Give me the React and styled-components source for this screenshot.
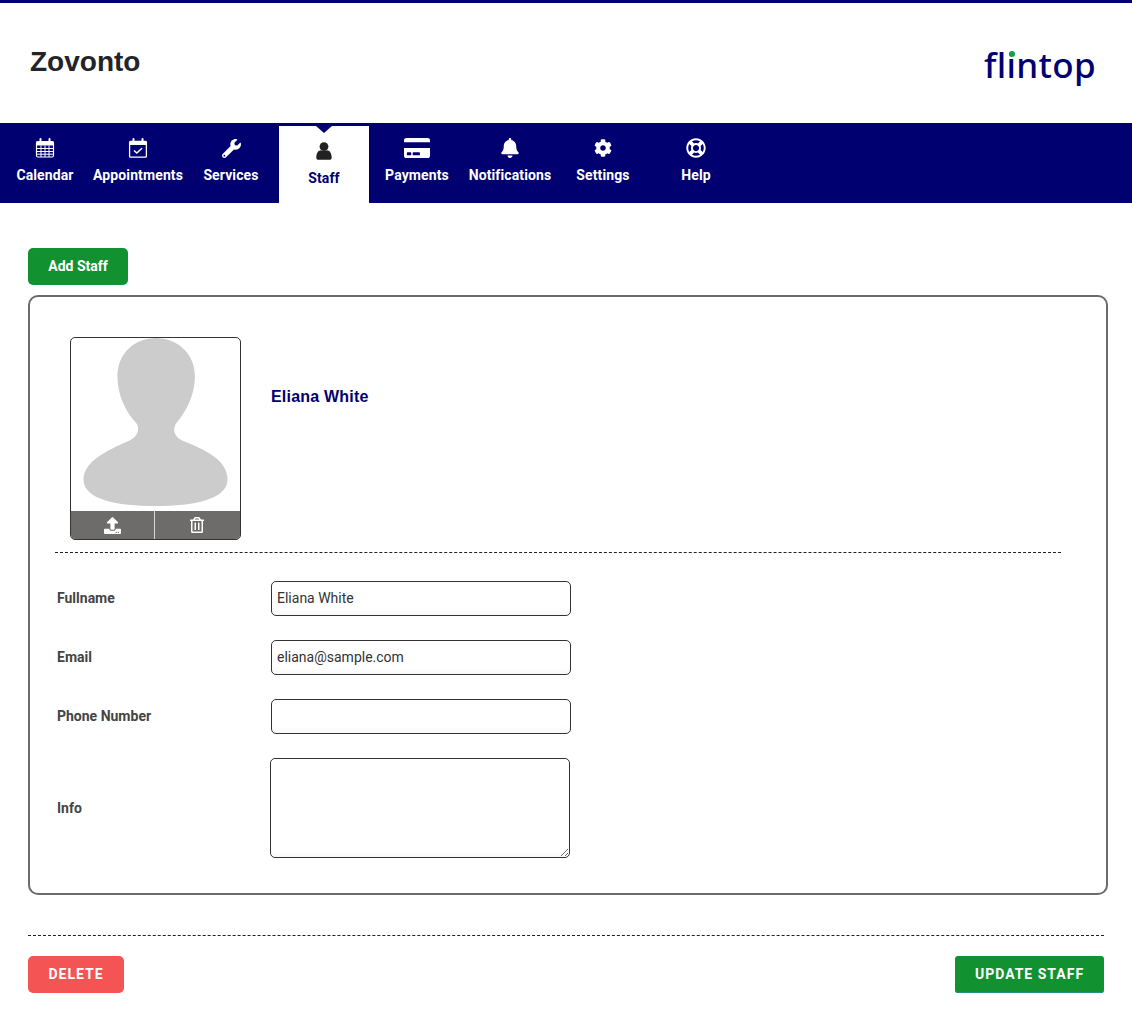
import React from 'react';
import styled, { createGlobalStyle } from 'styled-components';
import { FaWrench, FaCreditCard, FaBell, FaCog, FaRegLifeRing, FaUpload, FaRegTrashAlt } from 'react-icons/fa';

const NAVY = '#000070';

const GlobalStyle = createGlobalStyle`
  html, body { margin: 0; padding: 0; background: #fff; }
  body { font-family: Roboto, "Liberation Sans", sans-serif; color: #333; }
  * { box-sizing: border-box; }
`;

function CalendarIcon() {
  return (
    <svg width="20" height="20" viewBox="0 0 20 20" fill="none" stroke="currentColor">
      <rect x="1.5" y="3.5" width="17" height="15.5" rx="1.5" strokeWidth="1.2" />
      <path d="M1.5 3.5h17v4h-17z" fill="currentColor" stroke="none" />
      <path d="M5.5 1v4M14.5 1v4" strokeWidth="2" strokeLinecap="round" />
      <path d="M2 10.5h16M2 13.5h16M2 16.2h16M6 7.5V19M10 7.5V19M14 7.5V19" strokeWidth="1" />
    </svg>
  );
}

function AppointmentIcon() {
  return (
    <svg width="20" height="20" viewBox="0 0 20 20" fill="none" stroke="currentColor">
      <rect x="1.6" y="3.5" width="16.8" height="15.7" rx="1" strokeWidth="1.3" />
      <path d="M1.5 3.5h17v3.5h-17z" fill="currentColor" stroke="none" />
      <path d="M5.5 1v4M14.5 1v4" strokeWidth="2" strokeLinecap="round" />
      <path d="M6 12.5l2.8 2.6L14 10.3" strokeWidth="1.5" />
    </svg>
  );
}

function StaffIcon() {
  return (
    <svg width="16" height="18" viewBox="0 0 16 18" fill="currentColor">
      <circle cx="8" cy="4.6" r="4.4" />
      <path d="M0.3 15.5C0.3 11 2.5 8.2 5 8.2C6 9.2 10 9.2 11 8.2C13.5 8.2 15.7 11 15.7 15.5C15.7 17 14.8 17.8 13.5 17.8H2.5C1.2 17.8 0.3 17 0.3 15.5Z" />
    </svg>
  );
}

const items = [
  { label: 'Calendar', icon: <CalendarIcon /> },
  { label: 'Appointments', icon: <AppointmentIcon /> },
  { label: 'Services', icon: <FaWrench size={19} /> },
  { label: 'Staff', icon: <StaffIcon />, active: true },
  { label: 'Payments', icon: <FaCreditCard size={26} /> },
  { label: 'Notifications', icon: <FaBell size={20} /> },
  { label: 'Settings', icon: <FaCog size={18} /> },
  { label: 'Help', icon: <FaRegLifeRing size={20} /> },
];

const fields = [
  { label: 'Fullname', value: 'Eliana White' },
  { label: 'Email', value: 'eliana@sample.com' },
  { label: 'Phone Number', value: '' },
];

export default function App() {
  return (
    <>
      <GlobalStyle />
      <Header>
        <Brand>Zovonto</Brand>
        <Logo>
          flintop
          <LogoDot />
        </Logo>
      </Header>
      <Nav>
        {items.map((item) => (
          <NavItem key={item.label} $active={item.active}>
            <NavIcon $active={item.active}>{item.icon}</NavIcon>
            <NavLabel>{item.label}</NavLabel>
          </NavItem>
        ))}
      </Nav>
      <Main>
        <AddButton type="button">Add Staff</AddButton>
        <Card>
          <Profile>
            <PhotoBox>
              <PhotoArea>
                <svg width="169" height="173" viewBox="33 25 507 520">
                  <path
                    fill="#cccccc"
                    d="M288 25C350 25 405 70 405 140C405 200 375 250 350 280C338 296 340 320 365 332C420 355 503 385 503 450C503 510 400 530 288 530C170 530 70 510 70 450C70 390 160 355 210 332C235 320 240 296 228 280C200 250 172 200 172 140C172 70 225 25 288 25Z"
                  />
                </svg>
              </PhotoArea>
              <PhotoBar>
                <PhotoAction $divider><FaUpload size={17} /></PhotoAction>
                <PhotoAction><FaRegTrashAlt size={16} /></PhotoAction>
              </PhotoBar>
            </PhotoBox>
            <StaffName>Eliana White</StaffName>
          </Profile>
          <CardDivider />
          <FormRows>
            {fields.map((field) => (
              <Row key={field.label}>
                <Label $lift>{field.label}</Label>
                <Input type="text" defaultValue={field.value} />
              </Row>
            ))}
            <Row>
              <Label>Info</Label>
              <TextArea />
            </Row>
          </FormRows>
        </Card>
        <Footer>
          <DeleteButton type="button">DELETE</DeleteButton>
          <UpdateButton type="button">UPDATE STAFF</UpdateButton>
        </Footer>
      </Main>
    </>
  );
}

const Header = styled.header`
  height: 123px;
  border-top: 3px solid ${NAVY};
  padding: 0 36px 0 30px;
  display: flex;
  align-items: flex-start;
  justify-content: space-between;
`;

const Brand = styled.h1`
  margin: 40px 0 0;
  font-family: "Liberation Sans", Arial, sans-serif;
  font-size: 28px;
  line-height: 38px;
  font-weight: 700;
  color: #212529;
`;

const Logo = styled.div`
  position: relative;
  margin-top: 36px;
  font-family: "Noto Sans", sans-serif;
  font-size: 35px;
  line-height: 52px;
  font-weight: 500;
  letter-spacing: 0.3px;
  font-variant-ligatures: none;
  color: ${NAVY};
`;

const LogoDot = styled.span`
  position: absolute;
  left: 25px;
  top: 12px;
  width: 6px;
  height: 6px;
  border-radius: 50%;
  background: #12a14a;
`;

const Nav = styled.nav`
  height: 80px;
  background: ${NAVY};
  display: flex;
  gap: 3px;
  padding-top: 3px;
`;

const NavItem = styled.a`
  position: relative;
  width: 90px;
  height: 77px;
  display: flex;
  flex-direction: column;
  align-items: center;
  background: ${(p) => (p.$active ? '#fff' : 'transparent')};
  color: ${(p) => (p.$active ? '#222' : '#fff')};

  ${(p) => p.$active && `
    span:last-child { color: ${NAVY}; }

    &::before {
      content: "";
      position: absolute;
      top: 0;
      left: 37px;
      border-left: 8px solid transparent;
      border-right: 8px solid transparent;
      border-top: 7px solid ${NAVY};
    }
  `}
`;

const NavIcon = styled.span`
  height: 22px;
  margin-top: ${(p) => (p.$active ? '14px' : '11px')};
  display: flex;
  align-items: center;
  justify-content: center;
`;

const NavLabel = styled.span`
  margin-top: 6px;
  font-size: 14px;
  line-height: 20px;
  font-weight: 700;
  letter-spacing: 0.12px;
  white-space: nowrap;
`;

const Main = styled.main`
  padding: 45px 28px 0;
`;

const Button = styled.button`
  height: 37px;
  border: none;
  border-radius: 5px;
  color: #fff;
  font-family: Roboto, sans-serif;
  font-size: 14px;
  font-weight: 700;
  padding: 0 0 2px;
`;

const AddButton = styled(Button)`
  display: block;
  width: 100px;
  background: #129131;
`;

const Card = styled.section`
  margin-top: 10px;
  width: 1080px;
  height: 600px;
  border: 2px solid #6b6b6b;
  border-radius: 10px;
  padding: 40px 0 0 25px;
`;

const Profile = styled.div`
  display: flex;
  align-items: flex-start;
  padding-left: 15px;
`;

const PhotoBox = styled.div`
  width: 171px;
  height: 203px;
  border: 1px solid #333;
  border-radius: 5px;
  overflow: hidden;
  display: flex;
  flex-direction: column;
`;

const PhotoArea = styled.div`
  height: 173px;
  display: flex;
`;

const PhotoBar = styled.div`
  flex: 1;
  display: flex;
  background: #6d6c6a;
`;

const PhotoAction = styled.span`
  flex: ${(p) => (p.$divider ? '0 0 84px' : '1')};
  display: flex;
  align-items: center;
  justify-content: center;
  color: #fff;
  padding-right: ${(p) => (p.$divider ? '0' : '1px')};
  border-right: ${(p) => (p.$divider ? '1px solid #d8d8d8' : 'none')};
`;

const StaffName = styled.h2`
  margin: 49px 0 0 30px;
  font-family: "Liberation Sans", Arial, sans-serif;
  font-size: 16px;
  line-height: 22px;
  font-weight: 700;
  letter-spacing: 0.2px;
  color: ${NAVY};
`;

const CardDivider = styled.hr`
  width: 1006px;
  margin: 12px 0 0;
  border: none;
  border-top: 1px dashed #222;
`;

const FormRows = styled.div`
  margin-top: 28px;
  padding-left: 2px;
  display: flex;
  flex-direction: column;
  gap: 24px;
`;

const Row = styled.div`
  display: flex;
  align-items: center;
`;

const Label = styled.label`
  width: 214px;
  padding-bottom: ${(p) => (p.$lift ? '2px' : '0')};
  font-size: 14px;
  font-weight: 700;
  color: #444;
`;

const Input = styled.input`
  width: 300px;
  height: 35px;
  border: 1px solid #333;
  border-radius: 5px;
  padding: 0 5px 2px;
  background: #fff;
  color: #333;
  font-family: Roboto, sans-serif;
  font-size: 14px;
  box-shadow: inset 0 -6px 8px -6px rgba(0, 0, 0, 0.06);
  outline: none;
`;

const TextArea = styled.textarea`
  display: block;
  width: 300px;
  height: 100px;
  margin-left: -1px;
  border: 1px solid #333;
  border-radius: 5px;
  background: #fff;
  box-shadow: inset 0 -6px 8px -6px rgba(0, 0, 0, 0.06);
  outline: none;
`;

const Footer = styled.footer`
  margin-top: 40px;
  width: 1076px;
  padding-top: 20px;
  border-top: 1px dashed #222;
  display: flex;
  justify-content: space-between;
`;

const DeleteButton = styled(Button)`
  width: 96px;
  background: #f55454;
  letter-spacing: 1px;
`;

const UpdateButton = styled(Button)`
  width: 149px;
  background: #129131;
  border-radius: 3px;
  letter-spacing: 1px;
  box-shadow: inset 0 -1px 0 #2a8f8a;
`;
